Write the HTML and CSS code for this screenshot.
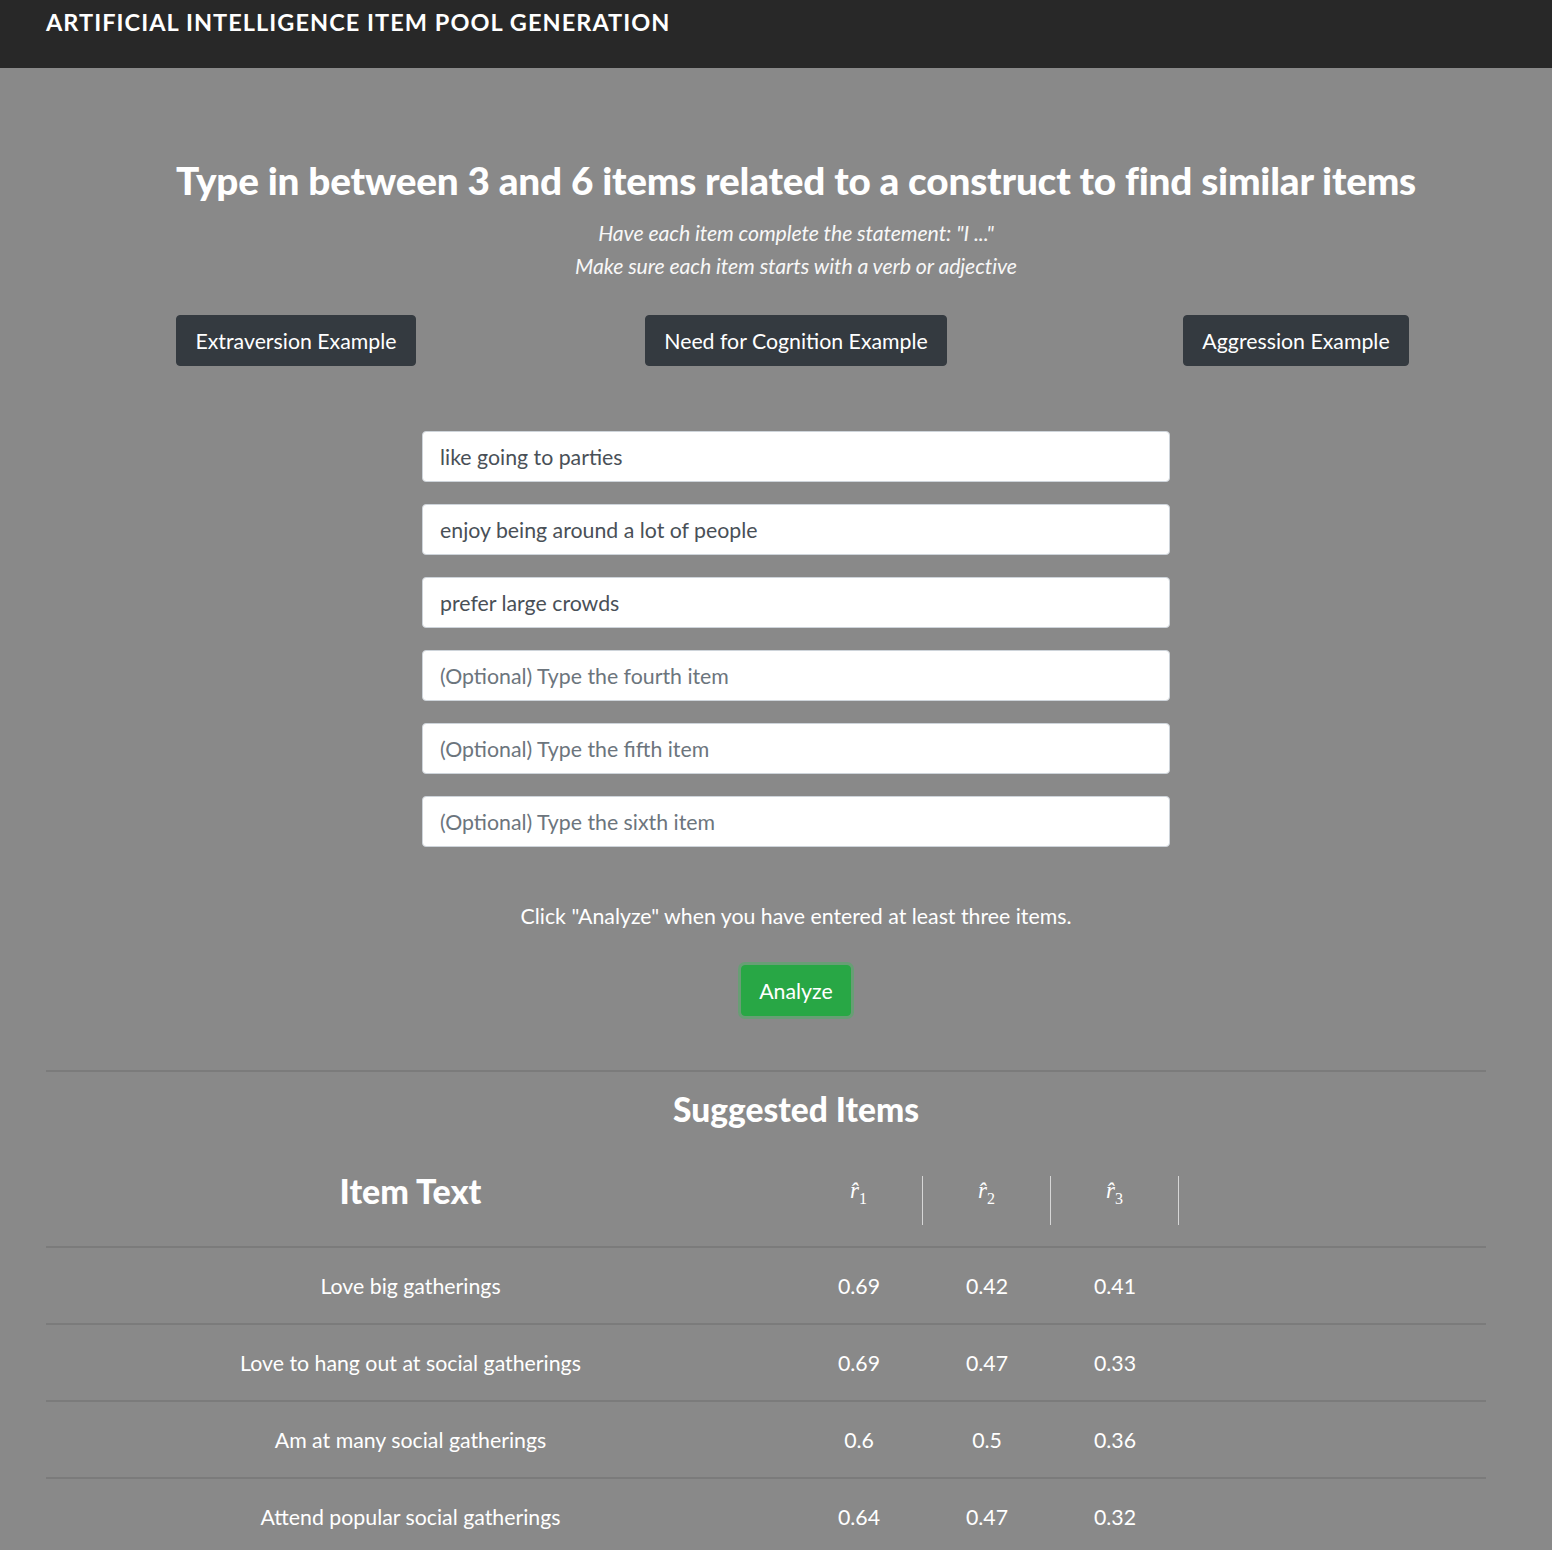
FILE: index.html
```html
<!DOCTYPE html>
<html lang="en">
<head>
    <meta charset="UTF-8">
    <meta name="viewport" content="width=device-width, initial-scale=1.0">
    <title>AI Item Pool Generation</title>
    <link rel="stylesheet" href="styles.css">
</head>
<body>
    <nav class="topbar">
        <span class="brand">ARTIFICIAL INTELLIGENCE ITEM POOL GENERATION</span>
    </nav>

    <main class="page">
        <section class="intro">
            <h1>Type in between 3 and 6 items related to a construct to find similar items</h1>
            <p class="hint">Have each item complete the statement: "I ..."</p>
            <p class="hint">Make sure each item starts with a verb or adjective</p>
        </section>

        <div class="examples">
            <div class="example-cell"><button class="btn-dark">Extraversion Example</button></div>
            <div class="example-cell"><button class="btn-dark">Need for Cognition Example</button></div>
            <div class="example-cell"><button class="btn-dark">Aggression Example</button></div>
        </div>

        <form class="items">
            <input type="text" class="item-input" value="like going to parties">
            <input type="text" class="item-input" value="enjoy being around a lot of people">
            <input type="text" class="item-input" value="prefer large crowds">
            <input type="text" class="item-input" placeholder="(Optional) Type the fourth item">
            <input type="text" class="item-input" placeholder="(Optional) Type the fifth item">
            <input type="text" class="item-input" placeholder="(Optional) Type the sixth item">
        </form>

        <p class="note">Click "Analyze" when you have entered at least three items.</p>

        <div class="analyze-wrap">
            <button class="btn-analyze">Analyze</button>
        </div>

        <hr class="divider">
        <h2>Suggested Items</h2>

        <div class="result-table">
            <div class="row head">
                <div class="cell text-col"><span class="col-title">Item Text</span></div>
                <div class="cell num-col first"><span class="rhat"><i>r&#770;</i><sub>1</sub></span></div>
                <div class="cell num-col"><span class="rhat"><i>r&#770;</i><sub>2</sub></span></div>
                <div class="cell num-col"><span class="rhat"><i>r&#770;</i><sub>3</sub></span></div>
            </div>
            <div class="row">
                <div class="cell text-col">Love big gatherings</div>
                <div class="cell num-col first">0.69</div>
                <div class="cell num-col">0.42</div>
                <div class="cell num-col">0.41</div>
            </div>
            <div class="row">
                <div class="cell text-col">Love to hang out at social gatherings</div>
                <div class="cell num-col first">0.69</div>
                <div class="cell num-col">0.47</div>
                <div class="cell num-col">0.33</div>
            </div>
            <div class="row">
                <div class="cell text-col">Am at many social gatherings</div>
                <div class="cell num-col first">0.6</div>
                <div class="cell num-col">0.5</div>
                <div class="cell num-col">0.36</div>
            </div>
            <div class="row">
                <div class="cell text-col">Attend popular social gatherings</div>
                <div class="cell num-col first">0.64</div>
                <div class="cell num-col">0.47</div>
                <div class="cell num-col">0.32</div>
            </div>
        </div>
    </main>
</body>
</html>
```

FILE: styles.css
```css
html, body {
    margin: 0;
    padding: 0;
}

body {
    font-family: Lato, "Open Sans", sans-serif;
    background-color: #898989;
    color: #fff;
    font-size: 21.3px;
    overflow-x: hidden;
}

.topbar {
    background-color: #282828;
    height: 68px;
    box-sizing: border-box;
    padding: 6px 46px 0;
}

.brand {
    font-size: 23.5px;
    font-weight: 700;
    letter-spacing: 1.05px;
    line-height: 32px;
}

.page {
    margin-left: 46px;
    width: 1500px;
}

.intro {
    text-align: center;
    padding-top: 89px;
}

h1 {
    margin: 0 0 14px;
    font-size: 38.7px;
    font-weight: 900;
    line-height: 46px;
    letter-spacing: -0.2px;
}

.hint {
    margin: 0;
    font-size: 21.3px;
    font-style: italic;
    line-height: 33px;
    color: #f7f7f7;
    letter-spacing: -0.1px;
}

.examples {
    display: grid;
    grid-template-columns: repeat(3, 500px);
    margin-top: 32px;
}

.example-cell {
    text-align: center;
}

button {
    font-family: inherit;
    cursor: pointer;
}

.btn-dark {
    background-color: #343a40;
    color: #fff;
    border: 1px solid #343a40;
    border-radius: 4px;
    font-size: 21.3px;
    height: 51px;
    padding: 0 18px;
}

.items {
    width: 748px;
    margin: 65px auto 0;
    display: flex;
    flex-direction: column;
    gap: 22px;
}

.item-input {
    height: 51px;
    box-sizing: border-box;
    border: 1px solid #ced4da;
    border-radius: 4px;
    padding: 0 17px;
    font-family: inherit;
    font-size: 21.3px;
    color: #495057;
    background-color: #fff;
}

.item-input::placeholder {
    color: #6c757d;
}

.note {
    text-align: center;
    margin: 54px 0 0;
    line-height: 30px;
}

.analyze-wrap {
    text-align: center;
    margin-top: 34px;
}

.btn-analyze {
    background-color: #28a745;
    color: #fff;
    border: 1px solid #28a745;
    border-radius: 4px;
    font-size: 21.3px;
    height: 51px;
    padding: 0 17px;
    box-shadow: 0 0 0 3px rgba(72, 180, 97, 0.5);
}

.divider {
    width: 1440px;
    margin: 54px 0 0;
    border: none;
    border-top: 2px solid #7b7b7b;
}

h2 {
    text-align: center;
    margin: 0;
    padding-top: 17px;
    font-size: 33.5px;
    font-weight: 900;
    line-height: 40px;
}

.result-table {
    width: 1440px;
}

.row {
    display: grid;
    grid-template-columns: 729px 148px 128px 128px;
    height: 77px;
    align-items: center;
    border-top: 2px solid #7b7b7b;
    box-sizing: border-box;
}

.row.head {
    height: 97px;
    border-top: none;
    margin-top: 20px;
    padding-top: 6px;
}

.cell {
    text-align: center;
}

.num-col.first {
    padding-left: 20px;
}

.head .text-col {
    padding-bottom: 20px;
}

.head .num-col {
    border-right: 1px solid #d6d6d6;
    height: 49px;
    padding-bottom: 16px;
    display: flex;
    align-items: center;
    justify-content: center;
    box-sizing: border-box;
}

.col-title {
    font-size: 34px;
    font-weight: 900;
}

.rhat {
    font-family: "Liberation Serif", serif;
    font-size: 23px;
}

.rhat sub {
    font-style: normal;
    font-size: 16px;
}
```
